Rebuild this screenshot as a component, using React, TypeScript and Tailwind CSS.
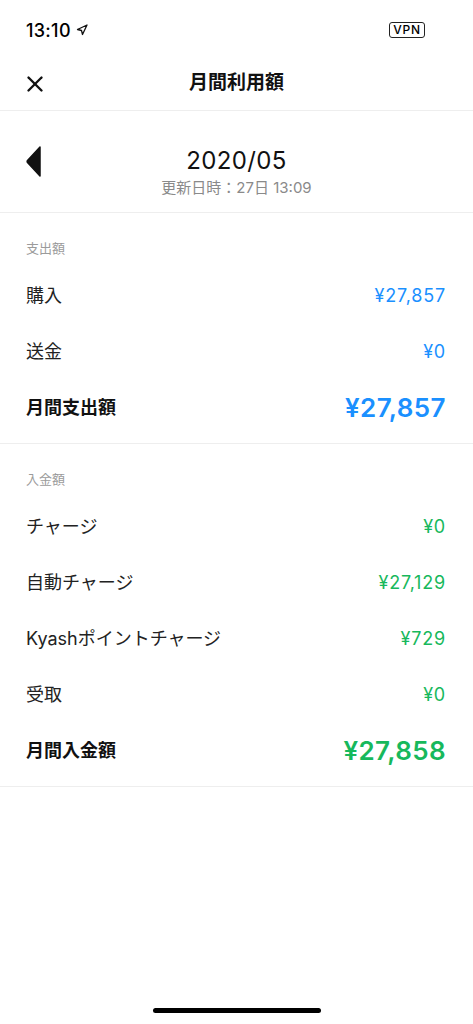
import { X } from 'lucide-react';

const font = { fontFamily: 'Inter, "Noto Sans CJK JP", sans-serif' };

type Row = { label: string; value: string };

function Section({
  title,
  rows,
  totalLabel,
  totalValue,
  color,
}: {
  title: string;
  rows: Row[];
  totalLabel: string;
  totalValue: string;
  color: string;
}) {
  return (
    <div className="border-b border-[#eeeeee] pb-[8px]">
      <div className="pl-[26px] pt-[27px] h-[54px] text-[13px] leading-[16px] text-[#9b9b9b]">
        {title}
      </div>
      {rows.map((r) => (
        <div key={r.label} className="h-[56px] flex items-center justify-between pl-[26px] pr-[27px]">
          <span className="text-[18px] text-[#222222]">{r.label}</span>
          <span className={`text-[18px] tracking-[0.8px] ${color}`}>{r.value}</span>
        </div>
      ))}
      <div className="h-[56px] flex items-center justify-between pl-[26px] pr-[27px]">
        <span className="text-[18px] font-bold text-[#111111]">{totalLabel}</span>
        <span className={`text-[26px] font-semibold tracking-[0.4px] ${color}`}>{totalValue}</span>
      </div>
    </div>
  );
}

export default function App() {
  return (
    <div className="w-[473px] h-[1024px] bg-white relative overflow-hidden" style={font}>
      {/* status bar */}
      <div className="h-[57px] flex items-center justify-between pl-[26px] pr-[48px] pt-[3px]">
        <div className="flex items-center gap-[5px]">
          <span className="text-[18px] font-medium text-black tracking-[0.3px]">13:10</span>
          <svg width="12" height="12" viewBox="0 0 24 24" fill="none" stroke="#111" strokeWidth="2.6" strokeLinejoin="round">
            <polygon points="3 11 22 2 13 21 11 13 3 11" />
          </svg>
        </div>
        <div className="border border-[#222] rounded-[3px] px-[3px] h-[16px] flex items-center text-[12px] leading-none font-medium tracking-[0.8px] text-black">
          VPN
        </div>
      </div>

      {/* nav */}
      <div className="h-[54px] relative flex items-center justify-center border-b border-[#eeeeee]">
        <X className="absolute left-[22px] top-[14px] w-[26px] h-[26px] text-[#111]" strokeWidth={2.2} />
        <span className="text-[19px] font-semibold text-[#111]">月間利用額</span>
      </div>

      {/* month */}
      <div className="h-[102px] relative flex flex-col items-center justify-center pt-[20px] border-b border-[#eeeeee]">
        <svg className="absolute left-[26px] top-[35px]" width="15" height="31" viewBox="0 0 15 31">
          <path d="M14 1 L14 30 L1.5 16.5 Q0.8 15.5 1.5 14.5 Z" fill="#111" stroke="#111" strokeWidth="1.5" strokeLinejoin="round" />
        </svg>
        <span className="text-[24px] leading-[30px] text-[#111] tracking-[0.4px]">2020/05</span>
        <span className="text-[15px] leading-[20px] text-[#8a8a8a] mt-[2px]">更新日時：27日 13:09</span>
      </div>

      <Section
        title="支出額"
        rows={[
          { label: '購入', value: '¥27,857' },
          { label: '送金', value: '¥0' },
        ]}
        totalLabel="月間支出額"
        totalValue="¥27,857"
        color="text-[#1a90ff]"
      />
      <Section
        title="入金額"
        rows={[
          { label: 'チャージ', value: '¥0' },
          { label: '自動チャージ', value: '¥27,129' },
          { label: 'Kyashポイントチャージ', value: '¥729' },
          { label: '受取', value: '¥0' },
        ]}
        totalLabel="月間入金額"
        totalValue="¥27,858"
        color="text-[#17b85c]"
      />

      {/* home indicator */}
      <div className="absolute left-[153px] top-[1008px] w-[168px] h-[5px] rounded-full bg-black" />
    </div>
  );
}
